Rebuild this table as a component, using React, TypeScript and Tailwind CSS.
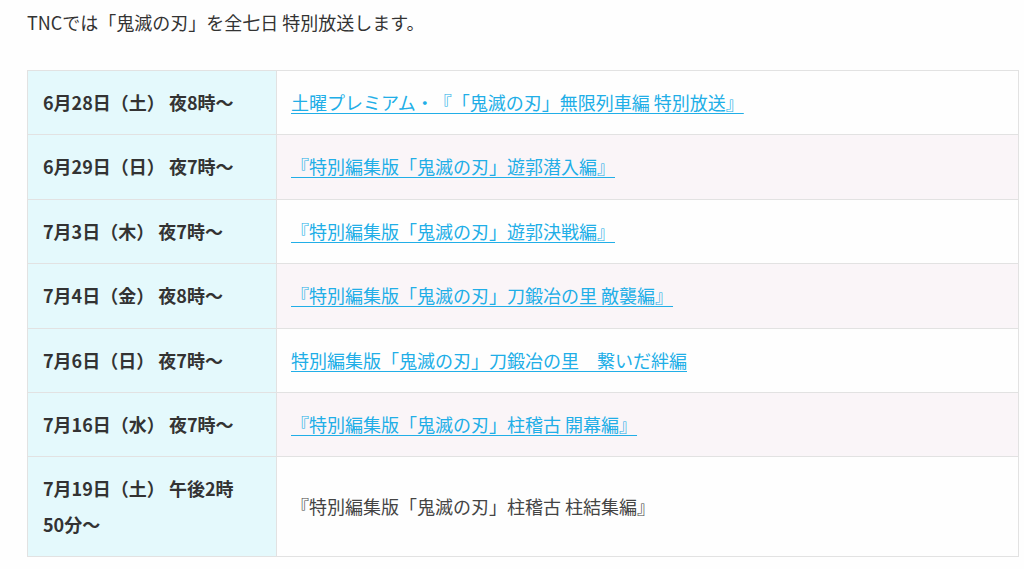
import React from 'react';

const rows = [
  { date: '6月28日（土） 夜8時～', title: '土曜プレミアム・『「鬼滅の刃」無限列車編 特別放送』', link: true, pink: false },
  { date: '6月29日（日） 夜7時～', title: '『特別編集版「鬼滅の刃」遊郭潜入編』', link: true, pink: true },
  { date: '7月3日（木） 夜7時～', title: '『特別編集版「鬼滅の刃」遊郭決戦編』', link: true, pink: false },
  { date: '7月4日（金） 夜8時～', title: '『特別編集版「鬼滅の刃」刀鍛冶の里 敵襲編』', link: true, pink: true },
  { date: '7月6日（日） 夜7時～', title: '特別編集版「鬼滅の刃」刀鍛冶の里　繋いだ絆編', link: true, pink: false },
  { date: '7月16日（水） 夜7時～', title: '『特別編集版「鬼滅の刃」柱稽古 開幕編』', link: true, pink: true },
  { date: '7月19日（土） 午後2時', tail: '50分～', title: '『特別編集版「鬼滅の刃」柱稽古 柱結集編』', link: false, pink: false },
];

const App: React.FC = () => {
  return (
    <div
      className="min-h-[569px] bg-[#fefefe] text-[#333] px-[27px] pt-[8px] text-[18px] leading-[28px] [text-spacing-trim:space-all]"
      style={{ fontFamily: '"Noto Sans CJK JP", "Noto Sans", sans-serif' }}
    >
      <p className="mb-[34px]">TNCでは「鬼滅の刃」を全七日 特別放送します。</p>

      <table className="w-[992px] border-collapse">
        <tbody>
          {rows.map((r, i) => (
            <tr key={i}>
              <th className="w-[249px] border border-[#e2e2e2] bg-[#e4f9fc] px-[15px] py-[14px] text-left align-middle font-bold leading-[35.4px] text-[#333]">
                {r.date}
                {r.tail && <span className="whitespace-nowrap">{r.tail}</span>}
              </th>
              <td
                className={`border border-[#e2e2e2] px-[14px] py-[14px] align-middle leading-[35.4px] ${
                  r.pink ? 'bg-[#faf5f8]' : 'bg-[#fefefe]'
                }`}
              >
                {r.link ? (
                  <a href="#" className="whitespace-pre text-[#21aee7] underline underline-offset-[3px]">
                    {r.title}
                  </a>
                ) : (
                  <span className="text-[#444]">{r.title}</span>
                )}
              </td>
            </tr>
          ))}
        </tbody>
      </table>
    </div>
  );
};

export default App;
